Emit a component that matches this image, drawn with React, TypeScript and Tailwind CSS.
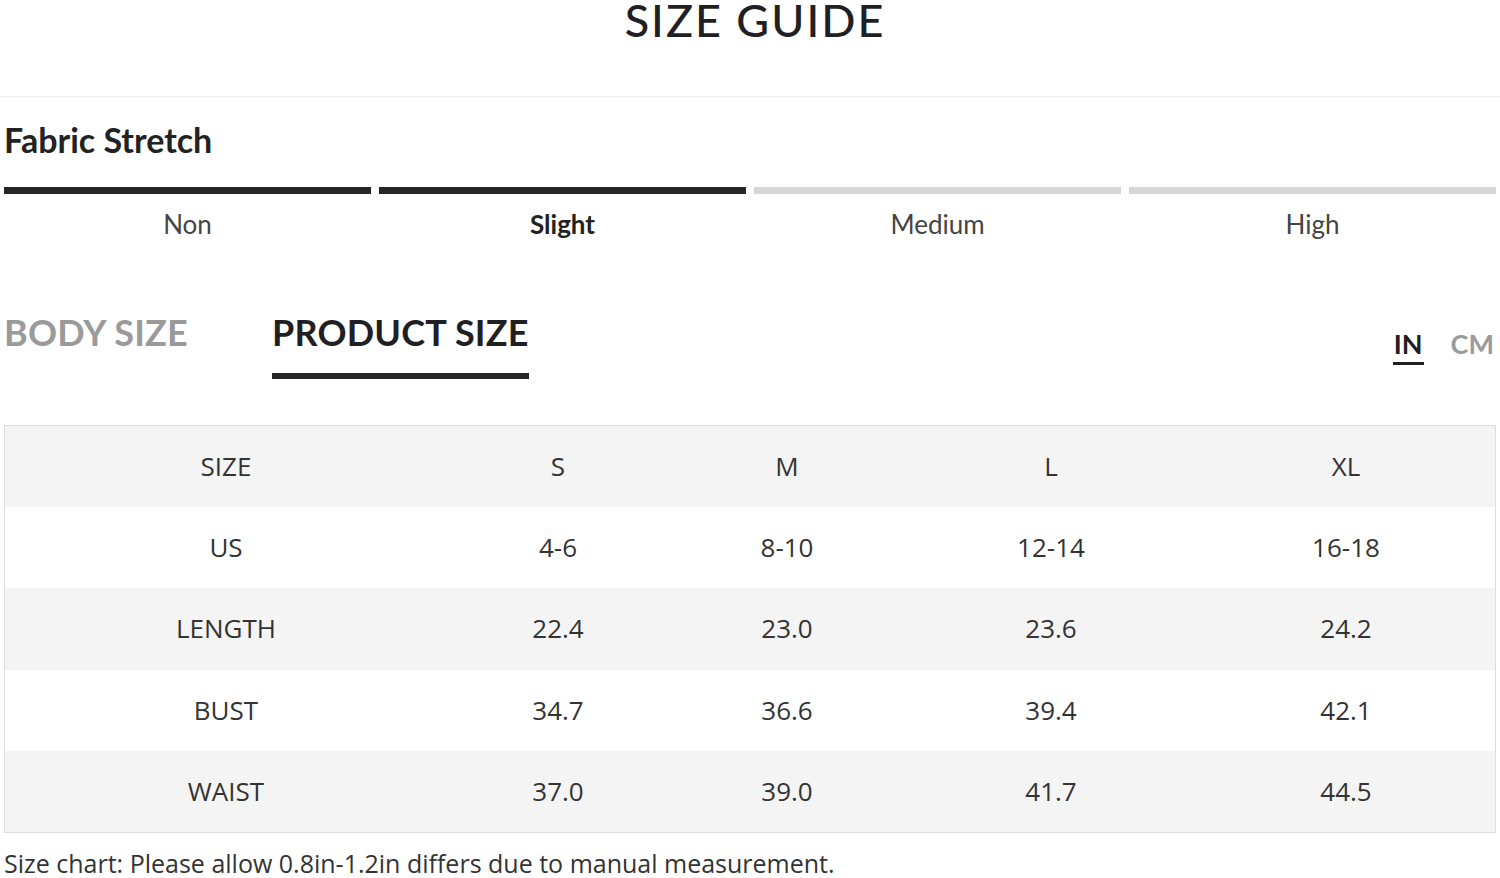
import clsx from "clsx";

const stretch = [
  { label: "Non", on: true, bold: false },
  { label: "Slight", on: true, bold: true },
  { label: "Medium", on: false, bold: false },
  { label: "High", on: false, bold: false },
];

const rows = [
  ["SIZE", "S", "M", "L", "XL"],
  ["US", "4-6", "8-10", "12-14", "16-18"],
  ["LENGTH", "22.4", "23.0", "23.6", "24.2"],
  ["BUST", "34.7", "36.6", "39.4", "42.1"],
  ["WAIST", "37.0", "39.0", "41.7", "44.5"],
];

export default function App() {
  return (
    <div className="h-[878px] w-[1500px] overflow-hidden bg-white font-['Lato',sans-serif] text-[#222]">
      <h1 className="mt-[-2px] h-[99px] border-b border-[#f0f0f0] pl-[10px] text-center text-[45px] font-medium leading-[45px] tracking-[2px] text-[#1f1f24]">
        SIZE GUIDE
      </h1>

      <div className="px-[4px]">
        <h2 className="mt-[21px] text-[34px] font-bold leading-[44px] text-[#222]">Fabric Stretch</h2>

        <ul className="mt-[25px] grid grid-cols-4 gap-[8px]">
          {stretch.map((s) => (
            <li key={s.label} className="flex flex-col items-center">
              <div className={clsx("h-[7px] w-full", s.on ? "bg-[#262626]" : "bg-[#d6d6d6]")} />
              <span
                className={clsx(
                  "mt-[14px] text-[26px] leading-[32px]",
                  s.bold ? "font-bold text-[#222]" : "text-[#444]"
                )}>
                {s.label}
              </span>
            </li>
          ))}
        </ul>

        <div className="mt-[70px] flex items-start justify-between">
          <div className="flex items-start gap-[84px]">
            <span className="text-[36px] font-bold leading-[44px] tracking-[0.2px] text-[#9a9a9a]">BODY SIZE</span>
            <div className="flex flex-col">
              <span className="text-[36px] font-bold leading-[44px] tracking-[0.2px] text-[#1f1f24]">PRODUCT SIZE</span>
              <div className="mt-[19px] h-[6px] bg-[#262626]" />
            </div>
          </div>
          <div className="mt-[18px] flex gap-[28px] pr-[2px] text-[27px] font-bold leading-[32px]">
            <div className="flex flex-col">
              <span className="text-[#1f1f24]">IN</span>
              <div className="mx-[-1px] mt-[2px] h-[3px] bg-[#1f1f24]" />
            </div>
            <span className="text-[#9a9a9a]">CM</span>
          </div>
        </div>

        <div className="mt-[46px] border border-[#dcdcdc] font-['Open_Sans',sans-serif] text-[26px] text-[#333]">
          {rows.map((r, i) => (
            <div
              key={r[0]}
              className={clsx(
                "grid h-[81.2px] grid-cols-[442px_222px_236px_292px_1fr] items-center text-center",
                i % 2 === 0 ? "bg-[#f4f4f4]" : "bg-white"
              )}>
              {r.map((c, j) => (
                <span key={j}>{c}</span>
              ))}
            </div>
          ))}
        </div>

        <p className="mt-[14px] font-['Open_Sans',sans-serif] text-[25px] leading-[32px] text-[#333]">
          Size chart: Please allow 0.8in-1.2in differs due to manual measurement.
        </p>
      </div>
    </div>
  );
}
